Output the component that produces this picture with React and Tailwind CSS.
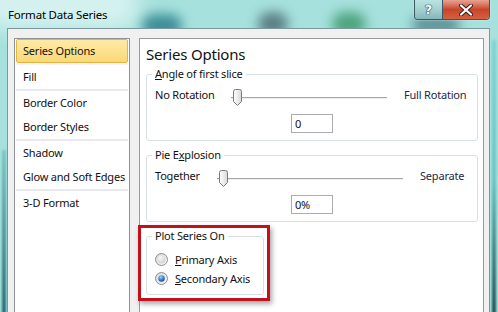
import React from "react";

const Thumb = () => (
  <svg width="11" height="18" viewBox="0 0 11 18" className="absolute left-[1px] top-0">
    <defs>
      <linearGradient id="tg" x1="0" y1="0" x2="1" y2="0">
        <stop offset="0" stopColor="#ffffff" />
        <stop offset="1" stopColor="#d9d9d9" />
      </linearGradient>
    </defs>
    <path d="M1.5 2.5 Q1.5 0.5 3.5 0.5 H7.5 Q9.5 0.5 9.5 2.5 V12.5 L5.5 16.5 L1.5 12.5 Z" fill="url(#tg)" stroke="#7a7a7a" />
  </svg>
);

const Slider = ({ w }) => (
  <div className={`relative h-[18px] ${w}`}>
    <div className="absolute left-0 right-0 top-[8px] h-[1px] bg-[#a9a9a9]" />
    <div className="absolute left-0 right-0 top-[9px] h-[1px] bg-[#ececec]" />
    <Thumb />
  </div>
);

const Radio = ({ checked }) => (
  <svg width="13" height="13" viewBox="0 0 13 13">
    <defs>
      <linearGradient id="ro" x1="0" y1="0" x2="1" y2="1">
        <stop offset="0" stopColor="#d4d4d4" />
        <stop offset="1" stopColor="#fafafa" />
      </linearGradient>
      <radialGradient id="ri" cx="0.35" cy="0.3" r="0.8">
        <stop offset="0" stopColor="#f7f7f7" />
        <stop offset="1" stopColor="#cfcfcf" />
      </radialGradient>
      <radialGradient id="rb" cx="0.4" cy="0.3" r="0.8">
        <stop offset="0" stopColor="#9fd4ff" />
        <stop offset="0.55" stopColor="#2b7fd0" />
        <stop offset="1" stopColor="#0f3f76" />
      </radialGradient>
    </defs>
    <circle cx="6.5" cy="6.5" r="6" fill="url(#ro)" stroke="#8f8f8f" />
    <circle cx="6.5" cy="6.5" r="4" fill={checked ? "#e8e8e8" : "url(#ri)"} />
    {checked && <circle cx="6.5" cy="6.5" r="3.2" fill="url(#rb)" />}
  </svg>
);

const Item = ({ children, selected }) => (
  <div
    className={
      selected
        ? "h-[24px] mx-[1px] flex items-center pl-[6px] whitespace-nowrap rounded-[2px] border border-[#e3b546] bg-gradient-to-b from-[#feeaa6] to-[#fcd874]"
        : "h-[24px] mx-[1px] flex items-center pl-[7px] whitespace-nowrap"
    }
  >
    {children}
  </div>
);

const Sep = ({ light }) => (
  <div className={light ? "h-[2px] mx-[1px] bg-[#f4f4f7]" : "h-[2px] mx-[1px] bg-[#e8eaf0]"} />
);

export default function App() {
  return (
    <div className="relative w-[498px] h-[312px] overflow-hidden bg-[#a6e1dd] font-['Noto_Sans',sans-serif] text-[11px] tracking-[-0.2px] text-[#111] leading-[16px]">
      {/* aero glass background blur */}
      <div className="absolute left-[-20px] top-[-20px] w-[160px] h-[50px] rounded-full bg-[#d4f1ef] blur-[10px]" />
      <div className="absolute left-[142px] top-[14px] w-[40px] h-[24px] rounded-full bg-[#3f8f98] blur-[6px]" />
      <div className="absolute left-[258px] top-[12px] w-[30px] h-[24px] rounded-full bg-[#5b7f86] blur-[6px]" />
      <div className="absolute left-[332px] top-[12px] w-[34px] h-[24px] rounded-full bg-[#4fa57f] blur-[6px]" />
      <div className="absolute left-[412px] top-[16px] w-[48px] h-[18px] rounded-full bg-[#5d9197] blur-[6px]" />
      <div className="absolute left-[2px] top-[150px] w-[4px] h-[170px] bg-gradient-to-b from-[#7cc6c6] to-[#1f6872] blur-[1px]" />
      <div className="absolute right-[2px] top-[40px] w-[4px] h-[280px] bg-gradient-to-b from-[#7fd3d2] via-[#6cc4c4] to-[#1c4a50] blur-[1px]" />

      <div className="relative flex flex-col h-full">
        {/* title bar */}
        <div className="h-[28px] flex items-start justify-between pl-[8px] pr-[8px]">
          <span className="mt-[7px] text-[11.5px] leading-[16px] text-black">Format Data Series</span>
          <div className="flex h-[20px] border border-t-0 border-[#3d5960] rounded-b-[4px] overflow-hidden shadow-[0_0_2px_rgba(255,255,255,0.6)]">
            <div className="w-[28px] h-full flex items-center justify-center bg-gradient-to-b from-[#c2e4e4]/70 to-[#8cb9bb]/80 border-r border-[#3d5960]">
              <span className="font-['DejaVu_Sans',sans-serif] font-bold text-[13px] leading-[13px] tracking-normal text-white [text-shadow:0_0_1px_#243a40,0_0_1px_#243a40,0_0_1px_#243a40]">?</span>
            </div>
            <div className="w-[46px] h-full flex items-center justify-center bg-gradient-to-b from-[#e7a394] via-[#c8452c] to-[#d4603f]">
              <svg width="14" height="12" viewBox="0 0 14 12">
                <path d="M2 1.5 L12 10.5 M12 1.5 L2 10.5" stroke="#3a1c14" strokeWidth="4" strokeLinecap="round" />
                <path d="M2 1.5 L12 10.5 M12 1.5 L2 10.5" stroke="#ffffff" strokeWidth="2.2" strokeLinecap="round" />
              </svg>
            </div>
          </div>
        </div>

        {/* client area */}
        <div className="flex-1 ml-[7px] mr-[8px] bg-[#f0f0f0] border-l border-t border-r border-[#7c979d] flex pt-[9px] pl-[6px] pr-[5px]">
          {/* list */}
          <div className="w-[116px] border border-b-0 border-[#8e9196] bg-white flex flex-col">
            <Item selected>Series Options</Item>
            <Sep light />
            <Item>Fill</Item>
            <Sep />
            <Item>Border Color</Item>
            <Item>Border Styles</Item>
            <Sep />
            <Item>Shadow</Item>
            <Item>Glow and Soft Edges</Item>
            <Sep />
            <Item>3-D Format</Item>
          </div>

          {/* panel */}
          <div className="flex-1 ml-[9px] border border-b-0 border-[#9a9a9a] bg-white flex flex-col pl-[6px] pr-[5px]">
            <div className="mt-[5px] h-[20px] text-[15px] leading-[20px] text-[#111]">Series Options</div>

            <fieldset className="mt-[2px] h-[75px] border border-[#d5dfe5] rounded-[3px] px-0">
              <legend className="ml-[5px] px-[3px] leading-[16px]">
                <span className="underline">A</span>ngle of first slice
              </legend>
              <div className="mt-[5px] flex items-start pl-[8px]">
                <div className="w-[76px] leading-[16px]">No Rotation</div>
                <div className="pt-[2px]"><Slider w="w-[156px]" /></div>
                <div className="ml-[17px] leading-[16px] text-[#1c2848] whitespace-nowrap">Full Rotation</div>
              </div>
              <div className="mt-[7px] mx-auto w-[42px] h-[19px] border border-[#abadb3] pl-[3px] leading-[17px]">0</div>
            </fieldset>

            <fieldset className="mt-[6px] h-[75px] border border-[#d5dfe5] rounded-[3px] px-0">
              <legend className="ml-[5px] px-[3px] leading-[16px]">
                Pie E<span className="underline">x</span>plosion
              </legend>
              <div className="mt-[5px] flex items-start pl-[8px]">
                <div className="w-[62px] leading-[16px]">Together</div>
                <div className="pt-[2px]"><Slider w="w-[186px]" /></div>
                <div className="ml-[17px] leading-[16px] text-[#1c2848] whitespace-nowrap">Separate</div>
              </div>
              <div className="mt-[7px] mx-auto w-[42px] h-[19px] border border-[#abadb3] pl-[3px] leading-[17px]">0%</div>
            </fieldset>

            <fieldset className="mt-[6px] w-[118px] h-[67px] border border-[#d5dfe5] rounded-[3px] px-0">
              <legend className="ml-[5px] px-[3px] leading-[16px]">Plot Series On</legend>
              <div className="mt-[7px] flex items-center gap-[7px] pl-[8px] h-[17px]">
                <Radio />
                <span><span className="underline">P</span>rimary Axis</span>
              </div>
              <div className="mt-[2px] flex items-center gap-[7px] pl-[8px] h-[17px]">
                <Radio checked />
                <span><span className="underline">S</span>econdary Axis</span>
              </div>
            </fieldset>
          </div>
        </div>
      </div>

      {/* red annotation box */}
      <div className="absolute left-[138px] top-[225px] w-[132px] h-[76px] border-[3px] border-[#c0121c] shadow-[2px_3px_5px_rgba(0,0,0,0.35)]" />
    </div>
  );
}
